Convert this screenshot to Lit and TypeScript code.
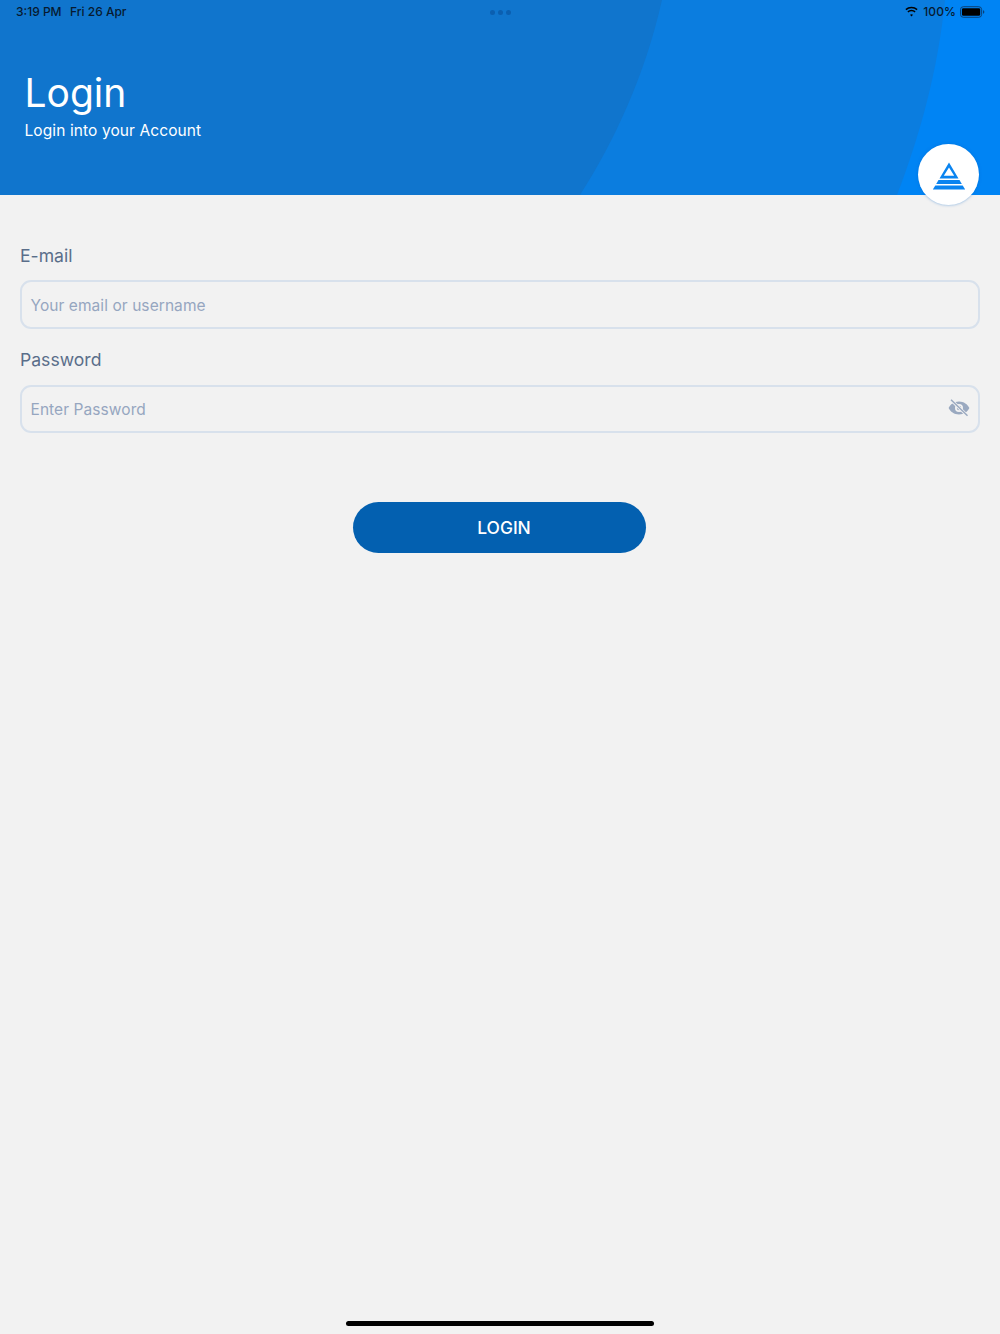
import { LitElement, html, css } from "lit";
import { customElement } from "lit/decorators.js";

@customElement("app-root")
export class AppRoot extends LitElement {
  static styles = css`
    :host { display: block; width: 1000px; height: 1334px; position: relative; overflow: hidden; background: #f2f2f2; font-family: Inter, "Noto Sans", sans-serif; }
    .header { position: relative; height: 195px; background: #0084f4; box-sizing: border-box; padding: 69px 25px 0 24.500px; color: #fff; }
    .bg { position: absolute; inset: 0; width: 1000px; height: 195px; }
    .status { position: absolute; top: 0; left: 0; right: 0; height: 23px; display: flex; align-items: center; padding: 0 15px 0 16px; font-size: 12px; font-weight: 450; color: #071a30; }
    .status .time { width: 54px; white-space: nowrap; }
    .status .spacer { flex: 1; }
    .status .right { display: flex; align-items: center; gap: 5px; }
    .status .pct { margin: 0 -1px; letter-spacing: .1px; }
    .dots { position: absolute; top: 10px; left: 490px; display: flex; gap: 3px; }
    .dots i { width: 5px; height: 5px; border-radius: 50%; background: #0b5fb0; }
    .title { position: relative; margin: 0; font-size: 39px; font-weight: 400; line-height: 48px; }
    .sub { position: relative; margin: 0; font-size: 15.500px; font-weight: 400; letter-spacing: .1px; line-height: 20px; margin-top: 4px; }
    .logo { position: absolute; left: 918px; top: 144px; width: 61px; height: 61px; border-radius: 50%; background: #fff; box-shadow: 0 0 3px rgba(0,100,200,.5); display: flex; align-items: center; justify-content: center; z-index: 1; }
    .form { padding: 48.500px 20px 0; }
    label { display: block; font-size: 17.600px; font-weight: 400; line-height: 24px; color: #5a6e8a; margin-bottom: 12.500px; }
    .field { height: 48.500px; box-sizing: border-box; border: 2px solid #d8e1ec; border-radius: 11px; display: flex; align-items: center; justify-content: space-between; padding: 0 8px 0 8.500px; font-size: 15.500px; font-weight: 400; letter-spacing: .07px; color: #96a6c0; margin-bottom: 19.500px; }
    .field span { position: relative; top: 1px; }
    .eye { margin-top: -2px; }
    .btn-wrap { display: flex; justify-content: center; margin-top: 69px; padding-right: 1px; }
    .btn { width: 293px; height: 51px; border-radius: 26px; background: #0360b0; color: #fff; font-size: 17.400px; font-weight: 450; display: flex; align-items: center; justify-content: center; padding-left: 9px; box-sizing: border-box; }
    .home { position: absolute; left: 346px; top: 1321px; width: 308px; height: 5px; border-radius: 3px; background: #000; }
  `;

  render() {
    return html`
      <div class="header">
        <svg class="bg" viewBox="0 0 1000 195" aria-hidden="true">
          <path d="M0 0H945C938 70 920 135 897 195H0Z" fill="#0b7ddf"/>
          <path d="M0 0H662C645 75 615 140 580 195H0Z" fill="#1075cd"/>
        </svg>
        <div class="status">
          <span class="time">3:19 PM</span><span>Fri 26 Apr</span>
          <span class="spacer"></span>
          <span class="right">
            <svg width="15" height="11" viewBox="0 0 14 11"><path d="M7 2.200c2 0 3.800.8 5.100 2l1-1.100A9 9 0 0 0 7 .7 9 9 0 0 0 .9 3.100l1 1.100A7.500 7.500 0 0 1 7 2.200Zm0 3c1.200 0 2.300.4 3.100 1.200l1-1.100A6 6 0 0 0 7 3.700a6 6 0 0 0-4.100 1.600l1 1.100A4.500 4.500 0 0 1 7 5.200Zm0 3c-.6 0-1.100.2-1.500.6L7 10.500l1.500-1.700c-.4-.4-.9-.6-1.500-.6Z" fill="#000"/></svg>
            <span class="pct">100%</span>
            <svg width="25" height="12" viewBox="0 0 26 12"><rect x=".5" y=".5" width="22" height="11" rx="3" fill="none" stroke="#0a3d70"/><rect x="2" y="2" width="19" height="8" rx="1.500" fill="#000"/><path d="M24 4.200c.8.200 1.300.9 1.300 1.800s-.5 1.600-1.300 1.800Z" fill="#0a3d70"/></svg>
          </span>
        </div>
        <div class="dots"><i></i><i></i><i></i></div>
        <h1 class="title">Login</h1>
        <p class="sub">Login into your Account</p>
      </div>
      <div class="logo">
        <svg width="34" height="30" viewBox="0 0 34 30">
          <path d="M17 2.500 26.500 18.500H7.500ZM17 7.500 11.800 15.800H22.200Z" fill="#0a84f0" fill-rule="evenodd"/>
          <path d="M6.500 20H27.500L29.800 24H4.200Z" fill="#0a84f0"/>
          <path d="M3.300 25.500H30.700L33.200 29.500H.8Z" fill="#0a84f0"/>
        </svg>
      </div>
      <div class="form">
        <label>E-mail</label>
        <div class="field"><span>Your email or username</span></div>
        <label>Password</label>
        <div class="field">
          <span>Enter Password</span>
          <svg class="eye" width="22" height="18" viewBox="0 0 22 18">
            <path d="M11 2.500C6.200 2.500 2.300 5.400.6 9c1.700 3.600 5.600 6.500 10.400 6.500s8.700-2.900 10.400-6.500C19.700 5.400 15.800 2.500 11 2.500Zm0 10.500a4 4 0 1 1 0-8 4 4 0 0 1 0 8Z" fill="#9aa9c0"/>
            <circle cx="11" cy="9" r="2.200" fill="#9aa9c0"/>
            <path d="M3 .8 19.500 16.800" stroke="#f2f2f2" stroke-width="3"/>
            <path d="M3 .8 19.500 16.800" stroke="#9aa9c0" stroke-width="1.500"/>
          </svg>
        </div>
        <div class="btn-wrap"><div class="btn">LOGIN</div></div>
      </div>
      <div class="home"></div>
    `;
  }
}
